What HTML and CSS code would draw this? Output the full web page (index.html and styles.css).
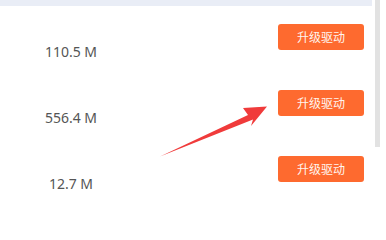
FILE: index.html
```html
<!DOCTYPE html>
<html>
<head>
<meta charset="utf-8">
<link rel="stylesheet" href="styles.css">
</head>
<body>
<div class="page">
  <div class="panel">
    <div class="band"></div>
    <div class="row">
      <div class="size">110.5 M</div>
      <div class="action"><button class="btn">升级驱动</button></div>
    </div>
    <div class="row">
      <div class="size">556.4 M</div>
      <div class="action"><button class="btn">升级驱动</button></div>
    </div>
    <div class="row">
      <div class="size">12.7 M</div>
      <div class="action"><button class="btn">升级驱动</button></div>
    </div>
  </div>
  <div class="scrollbar"></div>
  <svg class="arrow" width="386" height="208" viewBox="0 0 386 208">
    <polygon points="160,156.5 248,115 243,108 267,106.5 251,126 253,119.5" fill="#f03b3b"/>
  </svg>
</div>
</body>
</html>
```
FILE: styles.css
```css
html, body {
  margin: 0;
  padding: 0;
  background: #ffffff;
}
.page {
  position: relative;
  width: 386px;
  height: 208px;
  overflow: hidden;
  display: flex;
  gap: 3px;
  font-family: "Noto Sans", "Noto Sans CJK SC", sans-serif;
}
.panel {
  width: 372px;
  display: flex;
  flex-direction: column;
}
.band {
  height: 6px;
  background: #e9edf6;
}
.row {
  height: 66px;
  display: grid;
  grid-template-columns: 142px 1fr;
}
.size {
  padding-top: 36px;
  line-height: 20px;
  height: 20px;
  text-align: center;
  font-size: 14px;
  color: #555555;
}
.action {
  display: flex;
  justify-content: flex-end;
  align-items: flex-start;
  padding-top: 18px;
  padding-right: 8px;
}
.btn {
  width: 86px;
  height: 26px;
  border: none;
  border-radius: 3px;
  background: #fe6a2f;
  color: #fff5ee;
  font-family: "Noto Sans CJK SC", sans-serif;
  font-size: 12px;
  line-height: 26px;
  padding: 0;
  padding-bottom: 1px;
}
.scrollbar {
  width: 5px;
  height: 147px;
  background: #e2e2e2;
}
.arrow {
  position: absolute;
  left: 0;
  top: 0;
}
```
